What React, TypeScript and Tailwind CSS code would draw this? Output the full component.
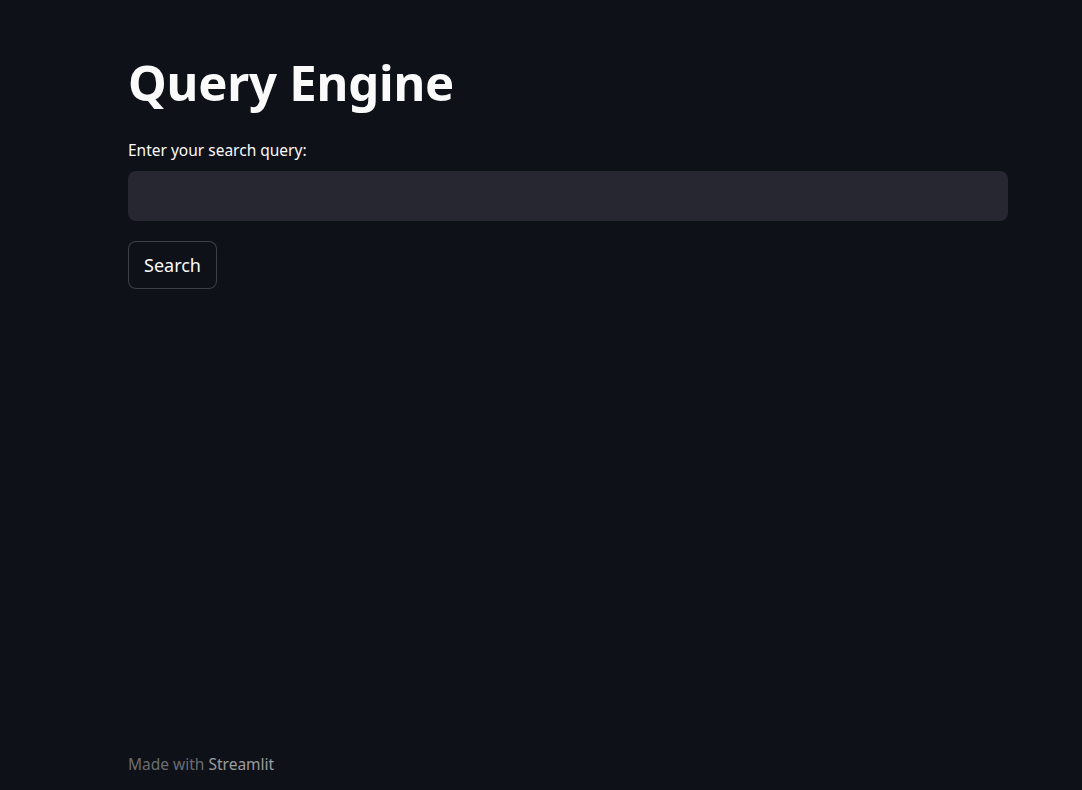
export default function App() {
  return (
    <div className="min-h-screen w-full bg-[#0e1117] text-[#fafafa] flex flex-col font-['Noto_Sans',sans-serif]">
      {/* main block */}
      <main className="flex-1 w-[880px] ml-[128px] pt-[50px]">
        <h1 className="text-[49px] font-bold leading-[64px] tracking-[-0.2px]">Query Engine</h1>
        <label className="block mt-[25px] text-[15.5px] leading-[22px] text-[#fafafa]">
          Enter your search query:
        </label>
        <input
          type="text"
          className="block mt-[10px] w-full h-[50px] rounded-lg bg-[#262730] px-3 text-[16px] outline-none"
        />
        <button className="mt-[20px] h-[48px] w-[89px] rounded-lg border border-[#fafafa33] bg-[#0e1117] text-[18px] text-[#fafafa]">
          Search
        </button>
      </main>

      {/* footer */}
      <footer className="w-[880px] ml-[128px] pb-[15px] text-[15.5px] leading-[22px] text-[#fafafa66]">
        Made with <span className="text-[#fafafa99]">Streamlit</span>
      </footer>
    </div>
  );
}
